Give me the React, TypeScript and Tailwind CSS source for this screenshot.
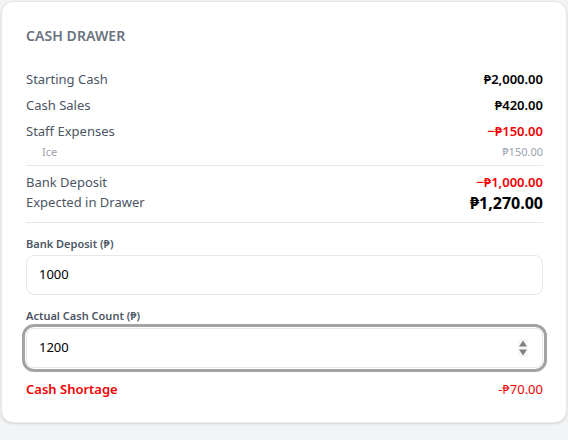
import React from "react";

const rows = [
  { label: "Starting Cash", amount: "₱2,000.00", red: false },
  { label: "Cash Sales", amount: "₱420.00", red: false },
  { label: "Staff Expenses", amount: "−₱150.00", red: true },
];

export default function App() {
  return (
    <div
      className="min-h-screen bg-[#f3f4f6] pt-px pl-px"
      style={{ fontFamily: '"Noto Sans", "Open Sans", sans-serif' }}
    >
      <div className="w-[566px] h-[422px] bg-white rounded-xl border border-[#e5e7eb] shadow-sm pl-6 pr-[23px] pt-6">
        <h2 className="h-5 leading-5 text-[14px] font-semibold text-[#6b7280] tracking-[0.005em] uppercase">
          Cash Drawer
        </h2>

        <div className="mt-6 flex flex-col gap-[6px]">
          {rows.map((r) => (
            <div key={r.label} className="flex items-center justify-between h-5 text-[13px]">
              <span className="text-[#4b5563]">{r.label}</span>
              <span className={r.red ? "text-[#f20000] font-semibold" : "text-black font-semibold"}>
                {r.amount}
              </span>
            </div>
          ))}
        </div>
        <div className="flex items-center justify-between h-4 mt-[2px] pl-4 text-[11px] text-[#9ca3af]">
          <span>Ice</span>
          <span>₱150.00</span>
        </div>

        <div className="border-t border-[#e5e7eb] mt-[5px] pt-[7px]">
          <div className="flex items-center justify-between h-5 text-[13px]">
            <span className="text-[#4b5563]">Bank Deposit</span>
            <span className="text-[#f20000] font-semibold">−₱1,000.00</span>
          </div>
          <div className="flex items-center justify-between h-5 text-[13px]">
            <span className="text-[#4b5563]">Expected in Drawer</span>
            <span className="text-black font-bold text-[16px]">₱1,270.00</span>
          </div>
        </div>

        <div className="border-t border-[#e5e7eb] mt-[9px] pt-[13px]">
          <label className="block h-4 leading-4 text-[11px] font-semibold text-[#4b5563]">
            Bank Deposit (₱)
          </label>
          <div className="mt-[3px] h-10 rounded-lg border border-[#e5e7eb] flex items-center px-3 text-[13px] text-black">
            1000
          </div>

          <label className="block mt-[13px] h-4 leading-4 text-[11px] font-semibold text-[#4b5563]">
            Actual Cash Count (₱)
          </label>
          <div className="mt-[4px] h-10 rounded-lg border border-[#e5e7eb] outline-[3px] outline-solid outline-[#a3a3a3] outline-offset-[1px] flex items-center justify-between pl-3 pr-[14px] text-[13px] text-black">
            <span>1200</span>
            <div className="w-[10px] h-[18px] bg-[#f7f7f7] flex items-center justify-center">
              <svg width="10" height="18" viewBox="0 0 10 18">
                <path d="M5 1.5 L9 7.5 L1 7.5 Z" fill="#808080" />
                <path d="M5 16.5 L9 10.5 L1 10.5 Z" fill="#808080" />
              </svg>
            </div>
          </div>

          <div className="mt-[12px] h-5 flex items-center justify-between text-[13px] text-[#f20000]">
            <span className="font-semibold">Cash Shortage</span>
            <span>-₱70.00</span>
          </div>
        </div>
      </div>
    </div>
  );
}
